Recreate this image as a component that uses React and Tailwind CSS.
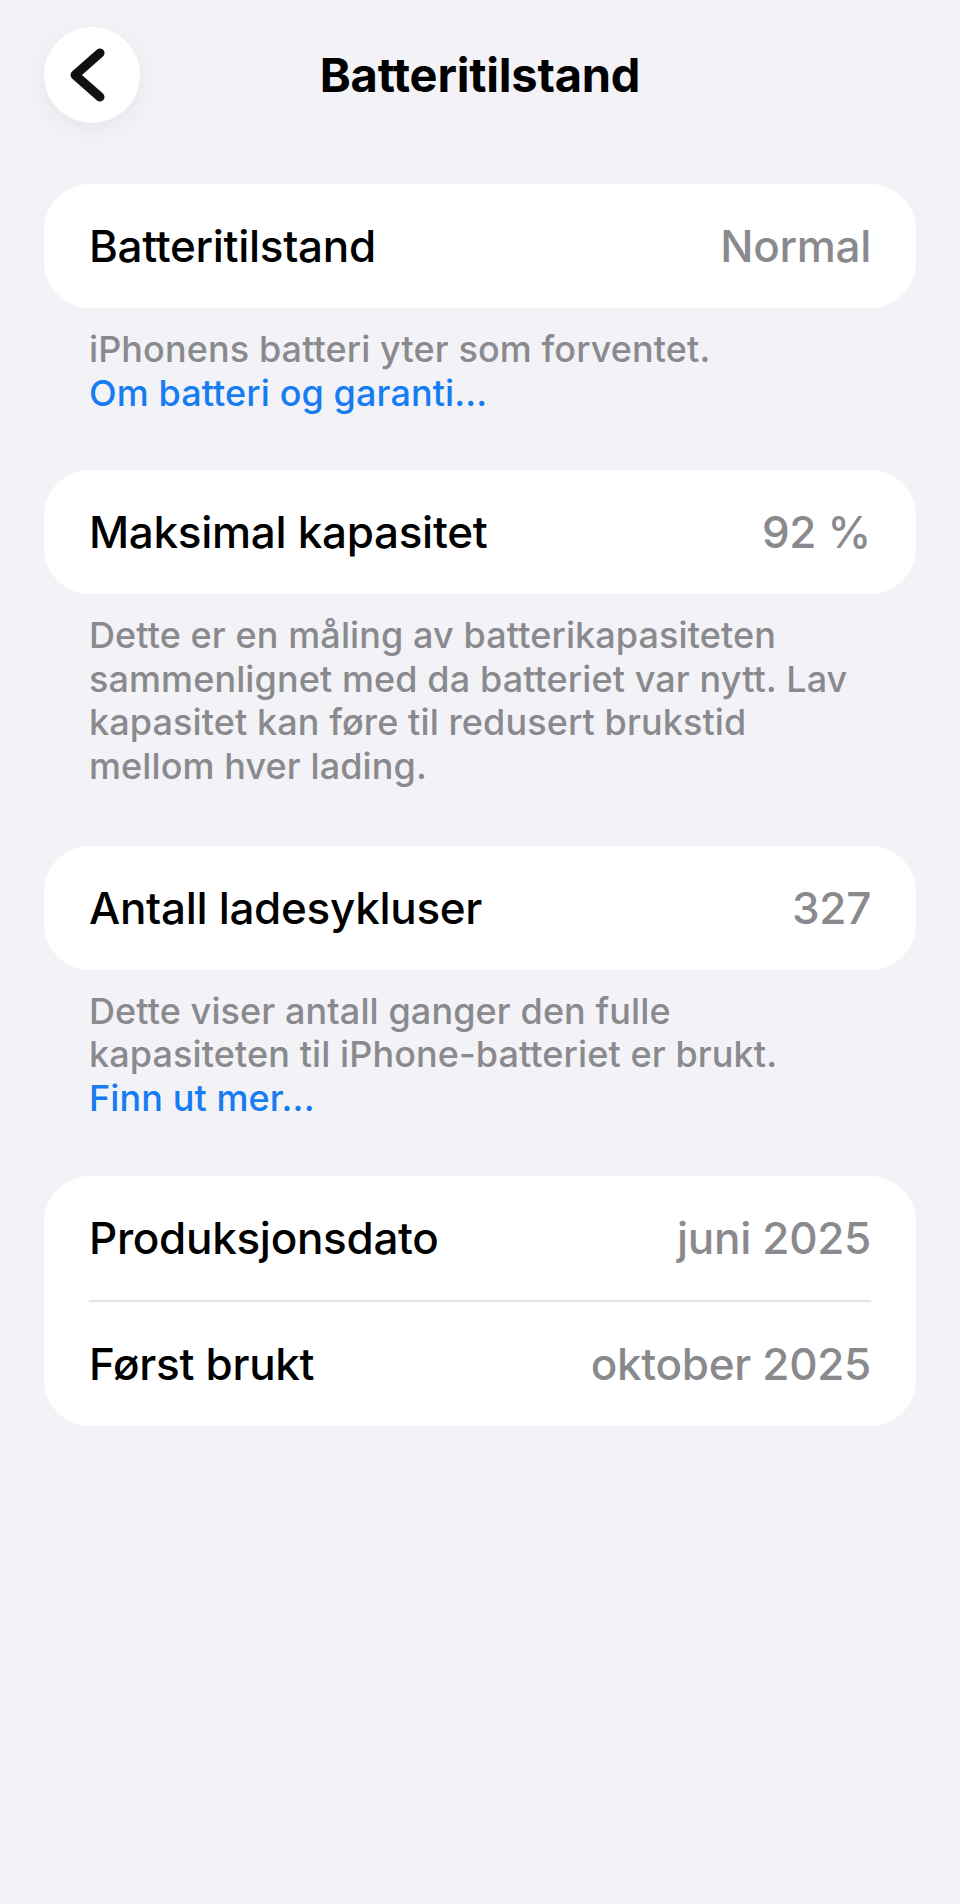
function Row({ label, value }) {
  return (
    <div className="flex h-[124px] items-center justify-between px-[45px]">
      <span className="text-[44px] font-medium tracking-[-0.3px] text-black">{label}</span>
      <span className="text-[44px] font-medium tracking-[-0.3px] text-[#8a8a8e]">{value}</span>
    </div>
  );
}

function Card({ children }) {
  return <div className="overflow-hidden rounded-[46px] bg-white">{children}</div>;
}

function Note({ lines, link }) {
  return (
    <p className="mt-[20px] px-[45px] text-[36px] font-medium leading-[43.6px] tracking-[0.1px] text-[#8a8a8e]">
      {lines.map((line, i) => (
        <span key={i} className="block">
          {line}
        </span>
      ))}
      {link && (
        <a href="#" className="block text-[#157cf2]">
          {link}
        </a>
      )}
    </p>
  );
}

export default function App() {
  return (
    <div className="min-h-[1904px] bg-[#f2f2f7] font-['Inter','Noto_Sans',sans-serif] antialiased">
      <header className="grid grid-cols-[96px_1fr_96px] items-center px-[44px] pt-[27px]">
        <button className="flex h-[96px] w-[96px] items-center justify-center rounded-full bg-white shadow-[0_6px_24px_rgba(0,0,0,0.06)]">
          <svg width="40" height="56" viewBox="0 0 40 56" fill="none" className="-ml-[6px]">
            <path d="M31 6 L6 28 L31 50" stroke="#111" strokeWidth="9" strokeLinecap="round" strokeLinejoin="round" />
          </svg>
        </button>
        <h1 className="text-center text-[47px] font-bold tracking-[-0.2px] text-black">Batteritilstand</h1>
        <div />
      </header>

      <main className="px-[44px] pt-[61px]">
        <section>
          <Card>
            <Row label="Batteritilstand" value="Normal" />
          </Card>
          <Note lines={["iPhonens batteri yter som forventet."]} link="Om batteri og garanti..." />
        </section>

        <section className="mt-[55px]">
          <Card>
            <Row label="Maksimal kapasitet" value="92 %" />
          </Card>
          <Note
            lines={[
              "Dette er en måling av batterikapasiteten",
              "sammenlignet med da batteriet var nytt. Lav",
              "kapasitet kan føre til redusert brukstid",
              "mellom hver lading.",
            ]}
          />
        </section>

        <section className="mt-[57px]">
          <Card>
            <Row label="Antall ladesykluser" value="327" />
          </Card>
          <Note
            lines={["Dette viser antall ganger den fulle", "kapasiteten til iPhone-batteriet er brukt."]}
            link="Finn ut mer..."
          />
        </section>

        <section className="mt-[56px]">
          <Card>
            <Row label="Produksjonsdato" value="juni 2025" />
            <div className="mx-[45px] h-[2px] bg-[#e4e4e8]" />
            <Row label="Først brukt" value="oktober 2025" />
          </Card>
        </section>
      </main>
    </div>
  );
}
